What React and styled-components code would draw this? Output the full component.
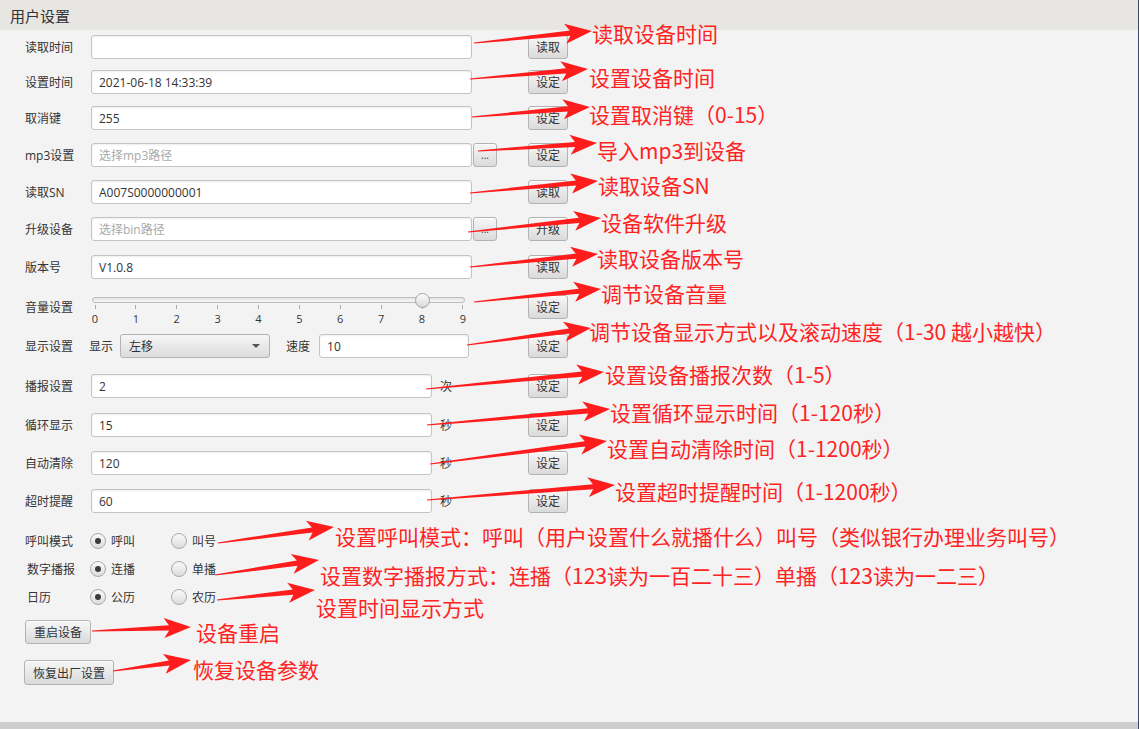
import React from "react";
import styled, { createGlobalStyle } from "styled-components";

const GlobalStyle = createGlobalStyle`
  html, body {
    margin: 0;
    padding: 0;
    background: #f3f3f3;
  }
  body {
    font-family: "Open Sans", "Noto Sans CJK SC", sans-serif;
    color: #333;
  }
`;

const UI_FONT = `"Open Sans", "Noto Sans CJK SC", sans-serif`;

// annotations drawn over the screenshot
const notes = [
  { text: "读取设备时间", x: 592, y: 33 },
  { text: "设置设备时间", x: 589, y: 77 },
  { text: "设置取消键（0-15）", x: 589, y: 114 },
  { text: "导入mp3到设备", x: 597, y: 150 },
  { text: "读取设备SN", x: 598, y: 185 },
  { text: "设备软件升级", x: 601, y: 222 },
  { text: "读取设备版本号", x: 597, y: 258 },
  { text: "调节设备音量", x: 601, y: 293 },
  { text: "调节设备显示方式以及滚动速度（1-30 越小越快）", x: 589, y: 331 },
  { text: "设置设备播报次数（1-5）", x: 605, y: 374 },
  { text: "设置循环显示时间（1-120秒）", x: 610, y: 412 },
  { text: "设置自动清除时间（1-1200秒）", x: 607, y: 448 },
  { text: "设置超时提醒时间（1-1200秒）", x: 615, y: 491 },
  { text: "设置呼叫模式：呼叫（用户设置什么就播什么）叫号（类似银行办理业务叫号）", x: 335, y: 536 },
  { text: "设置数字播报方式：连播（123读为一百二十三）单播（123读为一二三）", x: 320, y: 575 },
  { text: "设置时间显示方式", x: 316, y: 607 },
  { text: "设备重启", x: 196, y: 632 },
  { text: "恢复设备参数", x: 193, y: 669 },
];

const arrows = [
  [474, 43, 592, 31],
  [470, 79, 588, 69],
  [472, 117, 590, 107],
  [478, 151, 597, 143],
  [470, 193, 598, 181],
  [468, 232, 601, 218],
  [470, 267, 598, 254],
  [474, 302, 601, 289],
  [467, 345, 591, 328],
  [426, 389, 604, 372],
  [427, 425, 610, 409],
  [430, 464, 607, 441],
  [427, 500, 615, 485],
  [218, 543, 334, 527],
  [215, 575, 319, 560],
  [217, 600, 315, 590],
  [92, 631, 191, 627],
  [113, 671, 191, 660],
];

function arrowPoints([x1, y1, x2, y2]) {
  const dx = x2 - x1;
  const dy = y2 - y1;
  const len = Math.hypot(dx, dy);
  const ux = dx / len;
  const uy = dy / len;
  const nx = -uy;
  const ny = ux;
  const head = 27;
  const wing = 10;
  const shaft = 2.6;
  const bx = x2 - ux * head;
  const by = y2 - uy * head;
  const jx = bx + ux * 5;
  const jy = by + uy * 5;
  const pts = [
    [x1 + nx * 0.6, y1 + ny * 0.6],
    [jx + nx * shaft, jy + ny * shaft],
    [bx + nx * wing, by + ny * wing],
    [x2, y2],
    [bx - nx * wing, by - ny * wing],
    [jx - nx * shaft, jy - ny * shaft],
    [x1 - nx * 0.6, y1 - ny * 0.6],
  ];
  return pts.map((p) => p.map((v) => v.toFixed(1)).join(",")).join(" ");
}

const ticks = [0, 1, 2, 3, 4, 5, 6, 7, 8, 9];
const volume = 8;

function App() {
  return (
    <>
      <GlobalStyle />
      <Page>
        <Header>用户设置</Header>
        <Form>
          <Row>
            <Label>读取时间</Label>
            <Field>
              <TextBox readOnly defaultValue="" />
            </Field>
            <span />
            <ActionButton>读取</ActionButton>
          </Row>
          <Row $mt={11}>
            <Label>设置时间</Label>
            <Field>
              <TextBox readOnly defaultValue="2021-06-18 14:33:39" />
            </Field>
            <span />
            <ActionButton>设定</ActionButton>
          </Row>
          <Row $mt={12}>
            <Label>取消键</Label>
            <Field>
              <TextBox readOnly defaultValue="255" />
            </Field>
            <span />
            <ActionButton>设定</ActionButton>
          </Row>
          <Row $mt={13}>
            <Label>mp3设置</Label>
            <Field>
              <TextBox readOnly placeholder="选择mp3路径" />
            </Field>
            <Field>
              <BrowseButton>...</BrowseButton>
            </Field>
            <ActionButton>设定</ActionButton>
          </Row>
          <Row $mt={13}>
            <Label>读取SN</Label>
            <Field>
              <TextBox readOnly defaultValue="A007S0000000001" />
            </Field>
            <span />
            <ActionButton>读取</ActionButton>
          </Row>
          <Row $mt={13}>
            <Label>升级设备</Label>
            <Field>
              <TextBox readOnly placeholder="选择bin路径" />
            </Field>
            <Field>
              <BrowseButton>...</BrowseButton>
            </Field>
            <ActionButton>升级</ActionButton>
          </Row>
          <Row $mt={14}>
            <Label>版本号</Label>
            <Field>
              <TextBox readOnly defaultValue="V1.0.8" />
            </Field>
            <span />
            <ActionButton>读取</ActionButton>
          </Row>

          <VolumeRow>
            <Label $tall>音量设置</Label>
            <SliderBox>
              <Track />
              <Thumb style={{ left: 4 + volume * (368 / 9) - 7.5 }} />
              <TickRow>
                {ticks.map((t) => (
                  <Tick key={t}>
                    <TickMark />
                    <TickLabel>{t}</TickLabel>
                  </Tick>
                ))}
              </TickRow>
            </SliderBox>
            <span />
            <ActionButton $mt={5}>设定</ActionButton>
          </VolumeRow>

          <Row $mt={8} $label={64}>
            <Label>显示设置</Label>
            <Field>
              <InlineLabel>显示</InlineLabel>
              <Select>
                <span>左移</span>
                <Caret />
              </Select>
              <InlineLabel $ml={16}>速度</InlineLabel>
              <TextBox $w={150} $ml={2} readOnly defaultValue="10" />
            </Field>
            <span />
            <ActionButton>设定</ActionButton>
          </Row>

          <Row $mt={16}>
            <Label>播报设置</Label>
            <Field>
              <TextBox $w={341} readOnly defaultValue="2" />
              <Unit>次</Unit>
            </Field>
            <span />
            <ActionButton>设定</ActionButton>
          </Row>
          <Row $mt={15}>
            <Label>循环显示</Label>
            <Field>
              <TextBox $w={341} readOnly defaultValue="15" />
              <Unit>秒</Unit>
            </Field>
            <span />
            <ActionButton>设定</ActionButton>
          </Row>
          <Row $mt={14}>
            <Label>自动清除</Label>
            <Field>
              <TextBox $w={341} readOnly defaultValue="120" />
              <Unit>秒</Unit>
            </Field>
            <span />
            <ActionButton>设定</ActionButton>
          </Row>
          <Row $mt={14}>
            <Label>超时提醒</Label>
            <Field>
              <TextBox $w={341} readOnly defaultValue="60" />
              <Unit>秒</Unit>
            </Field>
            <span />
            <ActionButton>设定</ActionButton>
          </Row>

          <RadioRow $mt={18}>
            <Label>呼叫模式</Label>
            <Option>
              <Radio $checked />
              呼叫
            </Option>
            <Option>
              <Radio />
              叫号
            </Option>
          </RadioRow>
          <RadioRow $mt={8}>
            <Label $ml={2}>数字播报</Label>
            <Option>
              <Radio $checked />
              连播
            </Option>
            <Option>
              <Radio />
              单播
            </Option>
          </RadioRow>
          <RadioRow $mt={8}>
            <Label $ml={2}>日历</Label>
            <Option>
              <Radio $checked />
              公历
            </Option>
            <Option>
              <Radio />
              农历
            </Option>
          </RadioRow>

          <PlainButton $mt={13}>重启设备</PlainButton>
          <PlainButton $mt={16} $ml={-1} $h={25}>
            恢复出厂设置
          </PlainButton>
        </Form>
        <Footer />

        <Overlay>
          <svg width="1139" height="729" viewBox="0 0 1139 729">
            {arrows.map((a, i) => (
              <polygon key={i} points={arrowPoints(a)} fill="#ff1c1c" />
            ))}
          </svg>
          {notes.map((n) => (
            <Note key={n.text} style={{ left: n.x, top: n.y - 15 }}>
              {n.text}
            </Note>
          ))}
        </Overlay>
      </Page>
    </>
  );
}

const Page = styled.div`
  position: relative;
  width: 1139px;
  height: 729px;
  box-sizing: border-box;
  display: flex;
  flex-direction: column;
  background: #f3f3f3;
  border-right: 1px solid #3e4d66;
  overflow: hidden;
`;

const Header = styled.div`
  height: 30px;
  flex: none;
  display: flex;
  align-items: center;
  padding-left: 10px;
  background: #e8e6e2;
  font-size: 15px;
  color: #333;
`;

const Form = styled.div`
  flex: 1;
  display: flex;
  flex-direction: column;
  align-items: flex-start;
  padding: 5px 0 0 25px;
  font-size: 12px;
`;

const Footer = styled.div`
  height: 7px;
  flex: none;
  background: #cecece;
`;

const Row = styled.div`
  display: grid;
  grid-template-columns: ${(p) => p.$label ?? 66}px ${(p) => 447 - (p.$label ?? 66)}px 56px 40px;
  align-items: center;
  height: 24px;
  margin-top: ${(p) => p.$mt ?? 0}px;
`;

const VolumeRow = styled(Row)`
  height: 36px;
  align-items: start;
  margin-top: 11px;
`;

const Label = styled.div`
  font-size: 12px;
  color: #333;
  white-space: nowrap;
  margin-left: ${(p) => p.$ml ?? 0}px;
  line-height: ${(p) => (p.$tall ? "36px" : "normal")};
`;

const Field = styled.div`
  display: flex;
  align-items: center;
  height: 24px;
`;

const TextBox = styled.input`
  box-sizing: border-box;
  width: ${(p) => p.$w ?? 381}px;
  height: 24px;
  margin: 0 0 0 ${(p) => p.$ml ?? 0}px;
  padding: 0 7px;
  border: 1px solid #c4c4c4;
  border-radius: 3px;
  background: #fff;
  box-shadow: inset 0 1px 2px rgba(0, 0, 0, 0.07);
  font: 12px ${UI_FONT};
  color: #333;
  outline: none;
  &::placeholder {
    color: #a9a9a9;
  }
`;

const buttonSkin = `
  box-sizing: border-box;
  border: 1px solid #b3b3b3;
  border-radius: 3px;
  background: linear-gradient(#f7f7f7, #dadada);
  box-shadow: inset 0 1px 0 rgba(255, 255, 255, 0.7);
  font: 12px ${UI_FONT};
  color: #333;
  padding: 0;
  cursor: default;
`;

const ActionButton = styled.button`
  ${buttonSkin}
  width: 40px;
  height: 24px;
  margin-top: ${(p) => p.$mt ?? 0}px;
`;

const BrowseButton = styled.button`
  ${buttonSkin}
  width: 24px;
  height: 24px;
  margin-left: 1px;
  font-size: 10px;
  line-height: 1;
`;

const PlainButton = styled.button`
  ${buttonSkin}
  height: ${(p) => p.$h ?? 24}px;
  padding: 0 8px;
  margin-top: ${(p) => p.$mt ?? 0}px;
  margin-left: ${(p) => p.$ml ?? 0}px;
`;

const InlineLabel = styled.span`
  white-space: nowrap;
  margin-left: ${(p) => p.$ml ?? 0}px;
  margin-right: 7px;
`;

const Select = styled.div`
  box-sizing: border-box;
  width: 150px;
  height: 24px;
  display: flex;
  align-items: center;
  justify-content: space-between;
  padding: 0 9px 0 8px;
  border: 1px solid #b3b3b3;
  border-radius: 3px;
  background: linear-gradient(#f6f6f6, #dcdcdc);
  font-size: 12px;
`;

const Caret = styled.span`
  width: 0;
  height: 0;
  border-left: 4px solid transparent;
  border-right: 4px solid transparent;
  border-top: 4px solid #555;
`;

const Unit = styled.span`
  margin-left: 8px;
`;

const SliderBox = styled.div`
  position: relative;
  width: 381px;
  height: 36px;
`;

const Track = styled.div`
  box-sizing: border-box;
  width: 373px;
  height: 6px;
  margin: 7px 0 0 1px;
  border: 1px solid #bcbcbc;
  border-radius: 3px;
  background: linear-gradient(#e4e4e4, #f6f6f6);
`;

const Thumb = styled.div`
  position: absolute;
  top: 2.5px;
  box-sizing: border-box;
  width: 15px;
  height: 15px;
  border: 1px solid #a2a2a2;
  border-radius: 50%;
  background: linear-gradient(#fbfbfb, #d9d9d9);
`;

const TickRow = styled.div`
  width: 378px;
  margin-left: -1px;
  display: flex;
  justify-content: space-between;
`;

const Tick = styled.div`
  width: 10px;
  display: flex;
  flex-direction: column;
  align-items: center;
`;

const TickMark = styled.div`
  width: 1px;
  height: 4px;
  margin-top: 2px;
  background: #aaa;
`;

const TickLabel = styled.div`
  margin-top: 4px;
  font-size: 11px;
  line-height: 12px;
  color: #333;
`;

const RadioRow = styled.div`
  display: grid;
  grid-template-columns: 65px 81px 81px;
  align-items: center;
  height: 20px;
  margin-top: ${(p) => p.$mt ?? 0}px;
`;

const Option = styled.div`
  display: flex;
  align-items: center;
  gap: 5px;
  white-space: nowrap;
`;

const Radio = styled.span`
  box-sizing: border-box;
  width: 16px;
  height: 16px;
  border-radius: 50%;
  border: 1px solid #a9a9a9;
  background: linear-gradient(#fafafa, #dcdcdc);
  display: flex;
  align-items: center;
  justify-content: center;
  &::after {
    content: "";
    width: 6px;
    height: 6px;
    border-radius: 50%;
    background: #3b3b3b;
    display: ${(p) => (p.$checked ? "block" : "none")};
  }
`;

const Overlay = styled.div`
  position: absolute;
  inset: 0;
  pointer-events: none;
  svg {
    position: absolute;
    left: 0;
    top: 0;
  }
`;

const Note = styled.span`
  position: absolute;
  white-space: nowrap;
  font-family: "Noto Sans CJK SC", sans-serif;
  font-size: 21px;
  line-height: 30px;
  color: #ff2323;
`;

export default App;
